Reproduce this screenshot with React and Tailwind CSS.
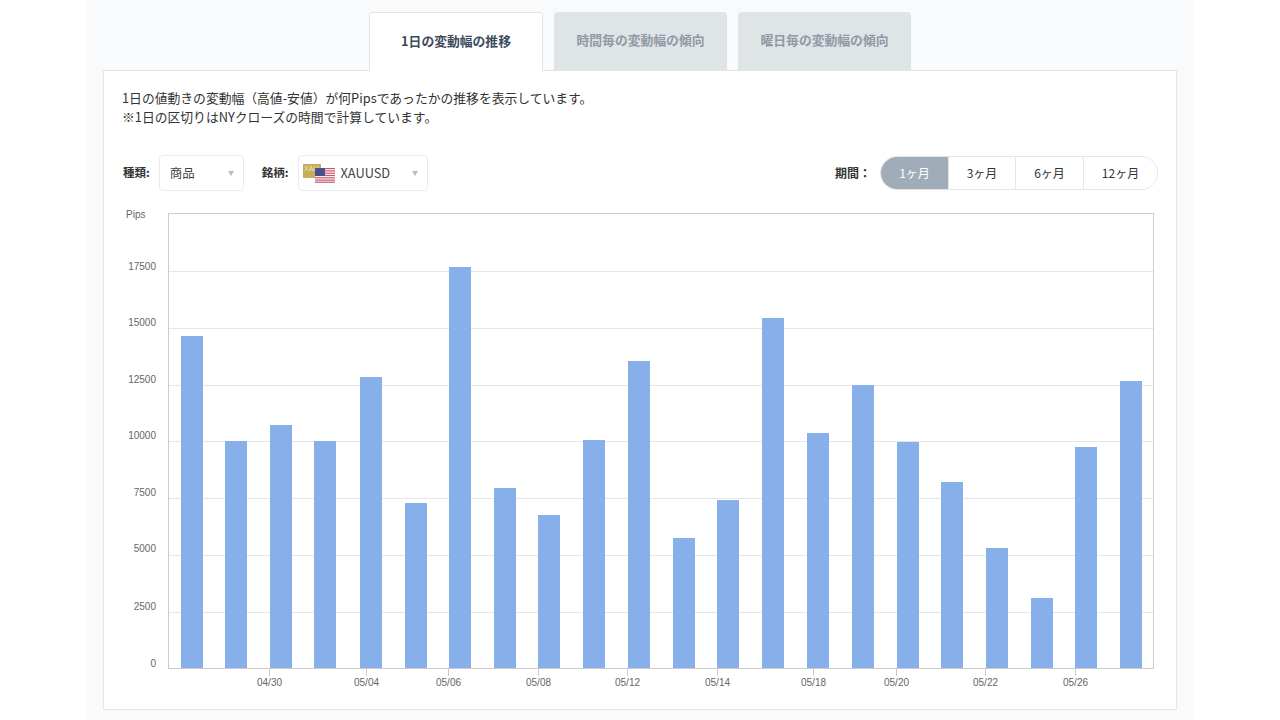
const FONT = "font-['Noto_Sans_CJK_JP','Noto_Sans',sans-serif]";

const bars = [
  [181, 336], [225, 441], [270, 425], [314, 441], [360, 377], [405, 503], [449, 267], [494, 488],
  [538, 515], [583, 440], [628, 361], [673, 538], [717, 500], [762, 318], [807, 433], [852, 385],
  [897, 442], [941, 482], [986, 548], [1031, 598], [1075, 447], [1120, 381],
];
const grid = [
  [271, '17500', 270], [328, '15000', 326], [385, '12500', 383], [441, '10000', 439], [498, '7500', 496], [555, '5000', 552], [612, '2500', 610],
];
const ticks = [
  [269, '04/30'], [366, '05/04'], [448, '05/06'], [538, '05/08'], [627, '05/12'], [717, '05/14'],
  [813, '05/18'], [896, '05/20'], [985, '05/22'], [1075, '05/26'],
];

function Chart() {
  return (
    <svg width="1072" height="490" viewBox="104 204 1072 490" className="block">
      <g fontFamily="'Liberation Sans', Arial, sans-serif" fontSize="10" fill="#666666">
        <rect x="168.5" y="213.5" width="985" height="455" fill="#ffffff" stroke="#cccccc" />
        {grid.map(([y, label, ty]) => (
          <g key={label}>
            <line x1="169" x2="1153" y1={y + 0.5} y2={y + 0.5} stroke="#e6e6e6" />
            <text x="156" y={ty} textAnchor="end">{label}</text>
          </g>
        ))}
        <text x="156" y="667" textAnchor="end">0</text>
        <text x="126" y="218">Pips</text>
        {bars.map(([x, top]) => (
          <rect key={x} x={x} y={top} width="22" height={668 - top} fill="#87b0ea" />
        ))}
        {ticks.map(([x, label]) => (
          <g key={label}>
            <line x1={x + 0.5} x2={x + 0.5} y1="668" y2="676" stroke="#cccccc" />
            <text x={x + 0.5} y="686" textAnchor="middle">{label}</text>
          </g>
        ))}
      </g>
    </svg>
  );
}

function Flag() {
  return (
    <svg width="33" height="19" viewBox="0 0 33 19" className="shrink-0 block">
      <rect x="0" y="0" width="18" height="14" fill="#c9ad5a" />
      <text x="1" y="7" fontSize="7" fill="#f3e7b8" fontFamily="'Liberation Sans', sans-serif">XAU</text>
      <rect x="12" y="4" width="20" height="15" fill="#ffffff" />
      {[4, 6.3, 8.6, 10.9, 13.2, 15.5, 17.6].map((y) => (
        <rect key={y} x="12" y={y} width="20" height="1.2" fill="#c9566a" />
      ))}
      <rect x="12" y="4" width="10" height="8" fill="#4a4f8f" />
    </svg>
  );
}

function Select({ className, children }) {
  return (
    <div className={`h-[36px] bg-white border border-[#e9eced] rounded-[4px] flex items-center relative ${className}`}>
      {children}
      <span className="absolute right-[9px] top-[15px] w-0 h-0 border-x-[3.5px] border-x-transparent border-t-[5px] border-t-[#b4bcc4]" />
    </div>
  );
}

function Tab({ active, children }) {
  return active ? (
    <div className="w-[174px] h-[59px] -mb-px relative z-10 bg-white border border-b-0 border-[#e2e6e8] rounded-t-[4px] pb-[2px] flex items-center justify-center text-[12.8px] font-bold text-[#3d4a5c]">
      {children}
    </div>
  ) : (
    <div className="w-[173px] h-[58px] bg-[#dfe4e6] rounded-t-[4px] pb-[2px] flex items-center justify-center text-[12.8px] font-bold text-[#8f9aa6]">
      {children}
    </div>
  );
}

function Period({ children, active, first, last, className }) {
  return (
    <div
      className={`h-[32px] flex items-center justify-center text-[12px] ${className} ${
        active ? 'bg-[#a0adb9] text-white' : 'bg-white text-[#333333]'
      } ${first ? 'rounded-l-full' : ''} ${last ? 'rounded-r-full' : 'border-r border-[#e2e6e8]'}`}
    >
      {children}
    </div>
  );
}

export default function App() {
  return (
    <div className={`h-screen overflow-hidden bg-white ${FONT}`}>
      <div className="w-[1108px] h-full mx-auto bg-[#f9fafb] px-[17px] pt-[12px]">
        <div className="flex justify-center items-end gap-[11px]">
          <Tab active>1日の変動幅の推移</Tab>
          <Tab>時間毎の変動幅の傾向</Tab>
          <Tab>曜日毎の変動幅の傾向</Tab>
        </div>
        <div className="h-[640px] bg-white border border-[#e2e6e8] pt-[17px]">
          <div className="px-[18px] text-[12.8px] leading-[19px] text-[#333333]">
            <p>1日の値動きの変動幅（高値-安値）が何Pipsであったかの推移を表示しています。</p>
            <p>※1日の区切りはNYクローズの時間で計算しています。</p>
          </div>
          <div className="mt-[29px] px-[18px] flex items-center justify-between">
            <div className="flex items-center pl-px">
              <span className="text-[11.5px] font-bold text-[#333333] mr-[9px]">種類:</span>
              <Select className="w-[85px] pl-[10px] text-[12.5px] text-[#444444]">商品</Select>
              <span className="text-[11.5px] font-bold text-[#333333] ml-[18px] mr-[9px]">銘柄:</span>
              <Select className="w-[130px] pl-[4px] text-[12.8px] text-[#444444]">
                <Flag />
                <span className="ml-[5px]">XAUUSD</span>
              </Select>
            </div>
            <div className="flex items-center mb-[1px]">
              <span className="text-[12px] font-bold text-[#333333] mr-[9px]">期間：</span>
              <div className="flex border border-[#e2e6e8] rounded-full">
                <Period active first className="w-[68px]">1ヶ月</Period>
                <Period className="w-[67px]">3ヶ月</Period>
                <Period className="w-[68px]">6ヶ月</Period>
                <Period last className="w-[73px]">12ヶ月</Period>
              </div>
            </div>
          </div>
          <div className="mt-[13px]">
            <Chart />
          </div>
        </div>
      </div>
    </div>
  );
}
